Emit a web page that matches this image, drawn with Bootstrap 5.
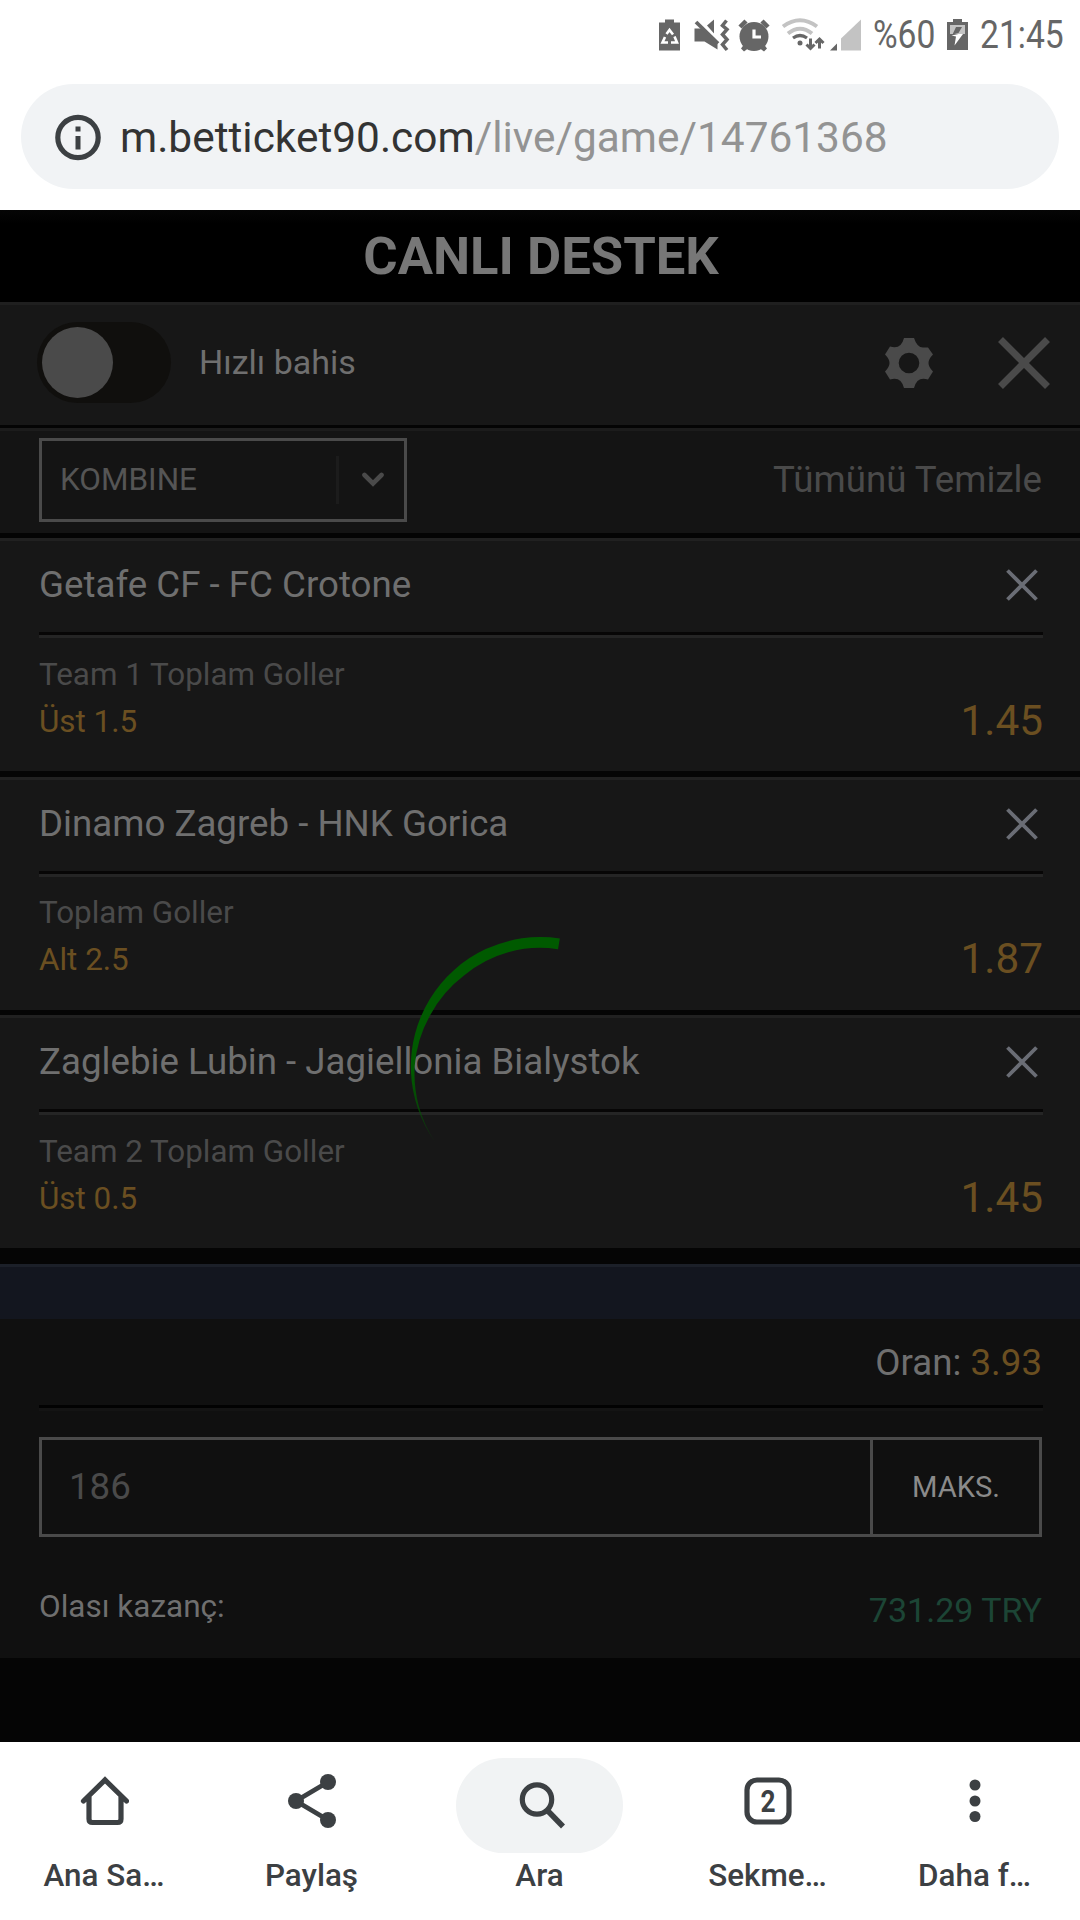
<!DOCTYPE html>
<html lang="tr">
<head>
<meta charset="utf-8">
<meta name="viewport" content="width=device-width, initial-scale=1">
<title>m.betticket90.com</title>
<link href="https://cdn.jsdelivr.net/npm/bootstrap@5.3.0/dist/css/bootstrap.min.css" rel="stylesheet">
<style>
body{font-family:Roboto,"Noto Sans",sans-serif;width:1080px;height:1920px;margin:0;overflow:hidden;background:#050505;line-height:1.2}
svg{display:block;flex:none}
.statusbar{height:70px;padding-right:16px;color:#666;font-size:39px;line-height:70px}
.narrow{display:block;transform:scaleX(.862);transform-origin:0 50%;white-space:nowrap}
.pct{width:74px;margin-left:4px}
.clock{width:84px;margin-left:12px}
.omni{height:140px;padding:14px 21px 21px}
.omni-pill{height:105px;background:#f1f3f5;padding:3px 32px 0 34px;font-size:42.4px;color:#333}
.omni-pill .path-part{color:#939393}
.omni-pill svg{margin:-1px 18px 0 -1px}
.support{height:92px;background:linear-gradient(#050505,#000 14px);color:#777;font-size:52.6px;padding:2px 0 0 2px}
.quick{height:126px;background:#171717;border-top:3px solid #1f1f1f;border-bottom:3px solid #040404;padding:0 30px 5px 37px;color:#6f6f6f;font-size:34px}
.toggle{width:134px;height:81px;background:#100f0d;padding:5px}
.knob{width:71px;height:71px;background:#4a4a4a}
.quick-x{margin-left:65px}
.kind{height:110px;background:#141414;border-top:3px solid #1c1c1c;border-bottom:5px solid #040404;padding:7px 38px 11px 39px;color:#4a4a4a;font-size:36.7px}
.combo{width:368px;height:84px;border:3px solid #4a4a4a;padding:0 20px 0 18px;font-size:31.5px;color:#555}
.combo-sep{width:3px;height:48px;background:#1c1c1c}
.combo svg{margin-left:23px}
.bet{height:233px;background:#171717;border-top:3px solid #212121;padding:0 37px 0 39px}
.bet+.bet{margin-top:5px}
.bet:nth-of-type(2){margin-top:6px}
.bet-head{height:91px;padding:0 5px 3px 0;font-size:36.7px;color:#6f6f6f}
.rule{height:6px;border-top:3px solid #070606;border-bottom:3px solid #252525}
.bet-body{padding-top:13px;font-size:31.4px;line-height:47px;color:#4a4a4a}
.bet:nth-of-type(2) .bet-body{padding-top:12px}
.gold{color:#6b4f21}
.price{font-size:42.3px;padding-bottom:1px}
.blueband{height:55px;margin-top:16px;background:#13161f;border-top:3px solid #1c2029}
.stake{height:339px;background:#101010;padding:0 38px 0 39px}
.total{height:86px;padding-top:3px;font-size:36.7px;color:#6f6f6f}
.total-rule{height:6px;margin-right:-1px;border-top:3px solid #020202;border-bottom:3px solid #141414}
.amount{height:100px;margin-top:26px;border:3px solid #4a4a4a;font-size:36.7px;color:#4a4a4a}
.amount-val{padding-left:27px}
.maks{width:169px;border-left:3px solid #4a4a4a;color:#8a8a8a;font-size:29.2px;padding-top:2px}
.payout{height:121px;padding-top:18px;font-size:31.5px;color:#6f6f6f}
.payout .sum{color:#1c4535;font-size:34px;padding-top:8px}
.navbottom{height:178px;margin-top:84px;background:#fff;color:#3c4043;font-size:31.4px;font-weight:500}
.tab-cell{width:207px;padding-top:33px}
.tab-cell:first-child{width:208px}
.tab-mid{width:249px;padding-top:16px}
.tab-cell .cap{line-height:38px;margin-top:30px}
.tab-mid .cap{line-height:38px;margin-top:4px}
.search-pill{width:167px;height:95px;background:#f1f3f4;padding-left:4px}
.spin{left:400px;top:926px}
</style>
</head>
<body class="position-relative">
<header class="bg-white">
  <div class="statusbar d-flex align-items-center justify-content-end">
    <svg width="210" height="40" viewBox="660 12.500 210 40">
      <g fill="#666">
        <path d="M666 17h9v3h6v28h-21V20h6z"/>
        <path d="M695.500 26h8l15 14v7l-13-8h-10z"/>
        <path d="M708 23l7-6v14z"/>
        <circle cx="755" cy="34" r="14.500"/>
        <path d="M745 42l4 4-4 3-3-3zM765 42l-4 4 4 3 3-3z"/>
        <path d="M838 41v7h-7z"/>
        <circle cx="801" cy="40.500" r="2.500"/>
      </g>
      <path d="M700 18.500l20 20" stroke="#fff" stroke-width="2.500"/>
      <path d="M697 19.500l22 21.500" stroke="#666" stroke-width="3.800"/>
      <path d="M727.500 18l-4 5 4.500 4-4.500 5 4.500 5-4.500 5 4.500 5.500" fill="none" stroke="#666" stroke-width="3.500"/>
      <path d="M741 24.500l6-6M769 24.500l-6-6" stroke="#666" stroke-width="4.500"/>
      <path d="M755 27v7.500h7" fill="none" stroke="#fff" stroke-width="3.200"/>
      <path d="M667.500 31.500l3-4 3.500 4.500M666 34.500l-2.500 5.500h5.500M675.500 34l2.500 6h-6" fill="none" stroke="#fff" stroke-width="2.600"/>
      <path d="M784 24q17-12.500 34 0M789 31q12-9.500 24 0" fill="none" stroke="#c3c3c3" stroke-width="4"/>
      <path d="M794 35.500q7-5 14 0" fill="none" stroke="#666" stroke-width="3.200"/>
      <path d="M811.500 36v9M807.500 42l4 4 4-4M820.500 46v-9M816.500 40.500l4-4 4 4" fill="none" stroke="#666" stroke-width="3"/>
      <path d="M862 17v31h-20V36z" fill="#c3c3c3"/>
    </svg>
    <div class="pct"><span class="narrow">%60</span></div>
    <svg width="21" height="36" viewBox="948 15 21 36">
      <path d="M954 17h9v3h6v28h-21V20h6z" fill="#666"/>
      <path d="M951 23h15v9h-15z" fill="#c3c3c3"/>
      <path d="M957 25h6l-3.500 6-6 1.500z" fill="#666"/>
      <path d="M952.500 33.500l7-1.500h4.500l-8.500 11.500 1.500-9z" fill="#fff"/>
    </svg>
    <div class="clock"><span class="narrow">21:45</span></div>
  </div>
  <div class="omni">
    <div class="omni-pill rounded-pill d-flex align-items-center">
      <svg width="48" height="48" viewBox="0 0 48 48"><circle cx="24" cy="23.500" r="20.200" fill="none" stroke="#3c4043" stroke-width="5.200"/><path d="M21.500 12.500h5v5h-5zM21.500 22h5v13.500h-5z" fill="#3c4043"/></svg>
      <span>m.betticket90.com</span><span class="path-part">/live/game/14761368</span>
    </div>
  </div>
</header>

<main>
  <div class="support d-flex align-items-center justify-content-center fw-bold">CANLI DESTEK</div>

  <div class="quick d-flex align-items-center">
    <div class="toggle rounded-pill"><div class="knob rounded-circle"></div></div>
    <span class="ms-4 ps-1">Hızlı bahis</span>
    <svg class="ms-auto" width="48" height="52" viewBox="-24 -26 48 52"><path fill="#4a4a4a" fill-rule="evenodd" d="M-5-25H5Q8-15.500 14-15.500H19L24-8.500Q19.500-4 19.500 0T24 8.500L19 16.500Q8 13 5 25H-5Q-8 13-19 16.500L-24 8.500Q-19.500 4-19.500 0T-24-8.500L-19-16.500Q-8-13-5-25ZM0-10.300A10.300 10.300 0 1 0 0 10.300A10.300 10.300 0 1 0 0-10.300Z"/></svg>
    <svg class="quick-x" width="52" height="52" viewBox="0 0 52 52"><path d="M2.500 2.500l47 47M49.500 2.500l-47 47" stroke="#4a4a4a" stroke-width="7"/></svg>
  </div>

  <div class="kind d-flex align-items-center justify-content-between">
    <div class="combo d-flex align-items-center">
      <span>KOMBINE</span><span class="combo-sep ms-auto"></span>
      <svg width="22" height="16" viewBox="0 0 22 16"><path d="M2.500 3L11 11.500 19.500 3" fill="none" stroke="#4a4a4a" stroke-width="4.600" stroke-linecap="round"/></svg>
    </div>
    <span>Tümünü Temizle</span>
  </div>

  <section>
    <article class="bet">
      <div class="bet-head d-flex align-items-center justify-content-between"><span>Getafe CF - FC Crotone</span><svg width="32" height="32" viewBox="0 0 32 32"><path d="M1.500 1.500l29 29M30.500 1.500l-29 29" stroke="#6a6d75" stroke-width="3.800"/></svg></div>
      <div class="rule"></div>
      <div class="bet-body d-flex justify-content-between align-items-end"><div>Team 1 Toplam Goller<div class="gold">Üst 1.5</div></div><span class="price gold">1.45</span></div>
    </article>
    <article class="bet">
      <div class="bet-head d-flex align-items-center justify-content-between"><span>Dinamo Zagreb - HNK Gorica</span><svg width="32" height="32" viewBox="0 0 32 32"><path d="M1.500 1.500l29 29M30.500 1.500l-29 29" stroke="#6a6d75" stroke-width="3.800"/></svg></div>
      <div class="rule"></div>
      <div class="bet-body d-flex justify-content-between align-items-end"><div>Toplam Goller<div class="gold">Alt 2.5</div></div><span class="price gold">1.87</span></div>
    </article>
    <article class="bet">
      <div class="bet-head d-flex align-items-center justify-content-between"><span>Zaglebie Lubin - Jagiellonia Bialystok</span><svg width="32" height="32" viewBox="0 0 32 32"><path d="M1.500 1.500l29 29M30.500 1.500l-29 29" stroke="#6a6d75" stroke-width="3.800"/></svg></div>
      <div class="rule"></div>
      <div class="bet-body d-flex justify-content-between align-items-end"><div>Team 2 Toplam Goller<div class="gold">Üst 0.5</div></div><span class="price gold">1.45</span></div>
    </article>
  </section>

  <div class="blueband"></div>
  <section class="stake">
    <div class="total d-flex align-items-center justify-content-end"><span>Oran: <span class="gold">3.93</span></span></div>
    <div class="total-rule"></div>
    <div class="amount d-flex align-items-stretch">
      <div class="amount-val flex-grow-1 d-flex align-items-center">186</div>
      <div class="maks d-flex align-items-center justify-content-center">MAKS.</div>
    </div>
    <div class="payout d-flex align-items-center justify-content-between"><span>Olası kazanç:</span><span class="sum">731.29 TRY</span></div>
  </section>
</main>

<nav class="navbottom d-flex">
  <div class="tab-cell d-flex flex-column align-items-center">
    <svg width="50" height="52" viewBox="-1 -1 50 52"><path d="M3.500 25L25 4l21.500 21M9 21v22q0 3.500 3.500 3.500h25q3.500 0 3.500-3.500V21" fill="none" stroke="#3c4043" stroke-width="5.200" stroke-linecap="round"/></svg>
    <div class="cap">Ana Sa…</div>
  </div>
  <div class="tab-cell d-flex flex-column align-items-center">
    <svg width="50" height="52" viewBox="0 -1 50 52" overflow="visible"><path d="M41 6L9 25l32 19" fill="none" stroke="#3c4043" stroke-width="4.800"/><g fill="#3c4043"><circle cx="41" cy="6" r="8"/><circle cx="9" cy="25" r="8"/><circle cx="41" cy="44" r="8"/></g></svg>
    <div class="cap">Paylaş</div>
  </div>
  <div class="tab-mid d-flex flex-column align-items-center">
    <div class="search-pill rounded-pill d-flex align-items-center justify-content-center">
      <svg width="50" height="50" viewBox="0 0 50 50"><circle cx="20" cy="18.500" r="14.700" fill="none" stroke="#3c4043" stroke-width="5.200"/><path d="M29.500 28.500L46 45.500" stroke="#3c4043" stroke-width="5.600"/></svg>
    </div>
    <div class="cap">Ara</div>
  </div>
  <div class="tab-cell d-flex flex-column align-items-center">
    <svg width="50" height="52" viewBox="0 -1 50 52"><rect x="4" y="4" width="42" height="42" rx="10" fill="none" stroke="#3c4043" stroke-width="5.200"/><text transform="translate(25 36) scale(.82 1)" text-anchor="middle" font-family="Roboto,sans-serif" font-weight="700" font-size="32" fill="#3c4043">2</text></svg>
    <div class="cap">Sekme…</div>
  </div>
  <div class="tab-cell d-flex flex-column align-items-center">
    <svg width="50" height="52" viewBox="0 -1 50 52"><g fill="#3c4043"><circle cx="25" cy="9" r="5.500"/><circle cx="25" cy="25" r="5.500"/><circle cx="25" cy="40.500" r="5.500"/></g></svg>
    <div class="cap">Daha f…</div>
  </div>
</nav>

<svg class="spin position-absolute" width="170" height="230" viewBox="400 926 170 230">
  <defs><linearGradient id="fade" gradientUnits="userSpaceOnUse" x1="0" y1="1075" x2="0" y2="1146"><stop offset="0" stop-color="#005a00"/><stop offset="1" stop-color="#005a00" stop-opacity=".3"/></linearGradient></defs>
  <path fill="url(#fade)" d="M559.800 938.500A129.500 129.500 0 0 0 435.200 1142.100A128.500 128.500 0 0 1 418.600 1105.400A126.500 126.500 0 0 1 414.700 1066A123 123 0 0 1 430.300 1014.900A120 120 0 0 1 464 975.400A118 118 0 0 1 558 949.300Z"/>
</svg>
<script src="https://cdn.jsdelivr.net/npm/bootstrap@5.3.0/dist/js/bootstrap.bundle.min.js"></script>
</body>
</html>
